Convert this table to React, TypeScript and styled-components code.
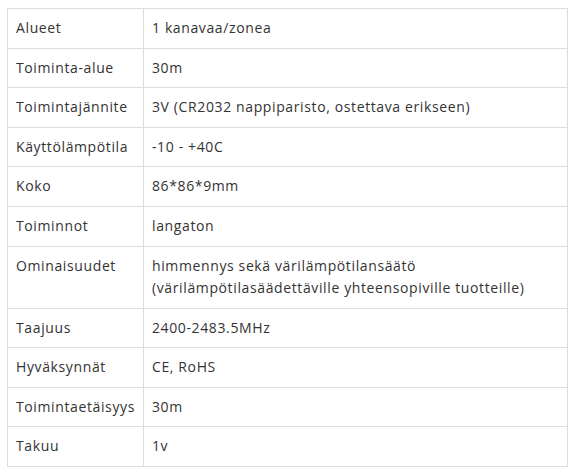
import React from "react";
import styled, { createGlobalStyle } from "styled-components";

const Global = createGlobalStyle`
  html, body { margin: 0; padding: 0; background: #fff; }
  body { font-family: "Open Sans", "Noto Sans", sans-serif; }
`;

const Wrap = styled.div`
  padding: 8px 4px 0 7px;
`;

const Table = styled.table`
  width: 561px;
  border-collapse: collapse;
  table-layout: fixed;
  font-size: 14px;
  line-height: 22.4px;
  letter-spacing: 0.62px;
  color: #333;
`;

const Row = styled.tr``;

const Cell = styled.td<{ $label?: boolean }>`
  border: 1px solid #ddd;
  padding: 8px 8px 8.2px 8px;
  vertical-align: top;
  width: ${(p) => (p.$label ? "119px" : "auto")};
  white-space: nowrap;
`;

const rows: [string, string[]][] = [
  ["Alueet", ["1 kanavaa/zonea"]],
  ["Toiminta-alue", ["30m"]],
  ["Toimintajännite", ["3V (CR2032 nappiparisto, ostettava erikseen)"]],
  ["Käyttölämpötila", ["-10 - +40C"]],
  ["Koko", ["86*86*9mm"]],
  ["Toiminnot", ["langaton"]],
  [
    "Ominaisuudet",
    [
      "himmennys sekä värilämpötilansäätö",
      "(värilämpötilasäädettäville yhteensopiville tuotteille)",
    ],
  ],
  ["Taajuus", ["2400-2483.5MHz"]],
  ["Hyväksynnät", ["CE, RoHS"]],
  ["Toimintaetäisyys", ["30m"]],
  ["Takuu", ["1v"]],
];

export default function App() {
  return (
    <Wrap>
      <Global />
      <Table>
        <tbody>
          {rows.map(([k, v]) => (
            <Row key={k}>
              <Cell $label>{k}</Cell>
              <Cell>
                {v.map((line, i) => (
                  <React.Fragment key={i}>
                    {i > 0 && <br />}
                    {line}
                  </React.Fragment>
                ))}
              </Cell>
            </Row>
          ))}
        </tbody>
      </Table>
    </Wrap>
  );
}
